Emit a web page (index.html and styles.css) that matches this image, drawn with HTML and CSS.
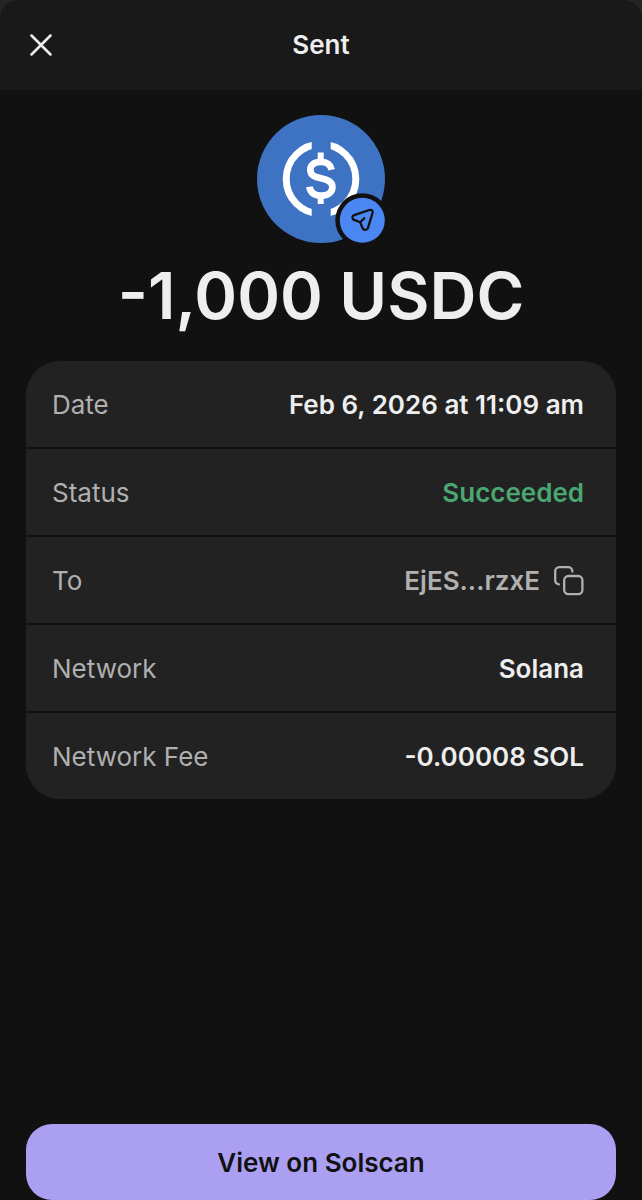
FILE: index.html
```
<!DOCTYPE html>
<html lang="en">
<head>
<meta charset="utf-8">
<meta name="viewport" content="width=device-width, initial-scale=1">
<title>Sent</title>
<link rel="stylesheet" href="styles.css">
</head>
<body>
<div class="sheet">
  <header class="header">
    <button class="close" type="button" aria-label="Close">
      <svg width="22" height="22" viewBox="0 0 22 22" aria-hidden="true"><path d="M1.5 1.5 20.5 20.5M20.5 1.5 1.5 20.5" fill="none" stroke="currentColor" stroke-width="2.5" stroke-linecap="round"/></svg>
    </button>
    <h1 class="title">Sent</h1>
  </header>
  <main class="content">
    <svg class="token" width="128" height="128" viewBox="0 0 128 128" aria-hidden="true">
      <circle cx="64" cy="64" r="64" fill="#3e73c4"/>
      <circle cx="64" cy="64" r="34.8" fill="none" stroke="#fff" stroke-width="7"/>
      <rect x="54.7" y="22" width="19" height="84" fill="#3e73c4"/>
      <path d="M63.7 40.500v6M63.700 81v5" fill="none" stroke="#fff" stroke-width="6" stroke-linecap="square"/>
      <path d="M74.700 54.800C73.500 49.500 69.500 46.900 64 46.900C57.500 46.900 53.300 50 53.300 54.800C53.300 60.500 58 62 64 63.300C70.500 64.700 75.400 66.500 75.400 72C75.400 77.500 71 80.700 64.300 80.700C57.500 80.700 53.300 77.500 52.400 71.800" fill="none" stroke="#fff" stroke-width="6.700"/>
      <circle cx="105.300" cy="105.300" r="27" fill="#111"/>
      <circle cx="105.300" cy="105.300" r="22.500" fill="#4a87f2"/>
      <path d="M107.300 103.200 103.200 107.200 97.200 104.900C94.800 103.900 94.800 101.100 97.200 100.200L112.300 95C114.600 94.300 116.100 95.800 115.500 98L111 112.900C110.200 115.500 106.600 115.600 105.600 113.200L103.200 107.200" fill="none" stroke="#111" stroke-width="2.300" stroke-linecap="round" stroke-linejoin="round"/>
    </svg>
    <p class="amount">-1,000 USDC</p>
    <dl class="details">
      <div class="row"><dt>Date</dt><dd>Feb 6, 2026 at 11:09 am</dd></div>
      <div class="row"><dt>Status</dt><dd class="success">Succeeded</dd></div>
      <div class="row"><dt>To</dt><dd class="address">EjES...rzxE
        <button class="copy" type="button" aria-label="Copy address">
          <svg width="30" height="30" viewBox="0 0 30 30" aria-hidden="true"><g fill="none" stroke="currentColor" stroke-width="2.300" stroke-linecap="round"><path d="M18.400 5.500V5.200A4.200 4.200 0 0 0 14.200 1.200H5.400A4.200 4.200 0 0 0 1.200 5.400V14A4.300 4.300 0 0 0 4.900 18.300"/><rect x="10.200" y="10" width="18.200" height="18.200" rx="4.200"/></g></svg>
        </button></dd></div>
      <div class="row"><dt>Network</dt><dd>Solana</dd></div>
      <div class="row"><dt>Network Fee</dt><dd>-0.00008 SOL</dd></div>
    </dl>
  </main>
  <footer class="footer">
    <button class="explorer" type="button">View on Solscan</button>
  </footer>
</div>
</body>
</html>
```
FILE: styles.css
```
* {
  box-sizing: border-box;
  margin: 0;
}

body {
  background: #242424;
  color: #eee;
  font-family: Inter, "Liberation Sans", sans-serif;
  font-size: 26px;
  line-height: 32px;
}

button {
  border: 0;
  padding: 0;
  background: none;
  color: inherit;
  font: inherit;
  cursor: pointer;
}

svg {
  display: block;
}

.sheet {
  display: flex;
  flex-direction: column;
  min-height: 100vh;
  border-radius: 20px 20px 0 0;
  background: #111;
  overflow: hidden;
}

.header {
  display: grid;
  grid-template-columns: 24px 1fr 24px;
  align-items: center;
  padding: 29px 30px;
  background: #191919;
}

.title {
  font-size: 26px;
  font-weight: 600;
  text-align: center;
}

.content {
  display: flex;
  flex: 1;
  flex-direction: column;
  align-items: center;
  padding: 25px 26px;
}

.amount {
  margin: 13px 0 25px;
  font-size: 65px;
  font-weight: 600;
  line-height: 80px;
}

.details {
  display: flex;
  flex-direction: column;
  gap: 2px;
  width: 100%;
  border-radius: 34px;
  overflow: hidden;
}

.row {
  display: flex;
  align-items: center;
  justify-content: space-between;
  min-height: 86px;
  padding: 2px 32px 0 26px;
  background: #222;
}

dt {
  color: #b0b0b0;
}

dd {
  font-weight: 600;
}

.success {
  color: #4aa772;
}

.address {
  display: flex;
  align-items: center;
  gap: 14px;
  color: #b0b0b0;
}

.footer {
  padding: 0 26px;
}

.explorer {
  display: block;
  width: 100%;
  height: 76px;
  padding-top: 2px;
  border-radius: 26px;
  background: #ab9ff2;
  color: #111;
  font-weight: 600;
}
```
